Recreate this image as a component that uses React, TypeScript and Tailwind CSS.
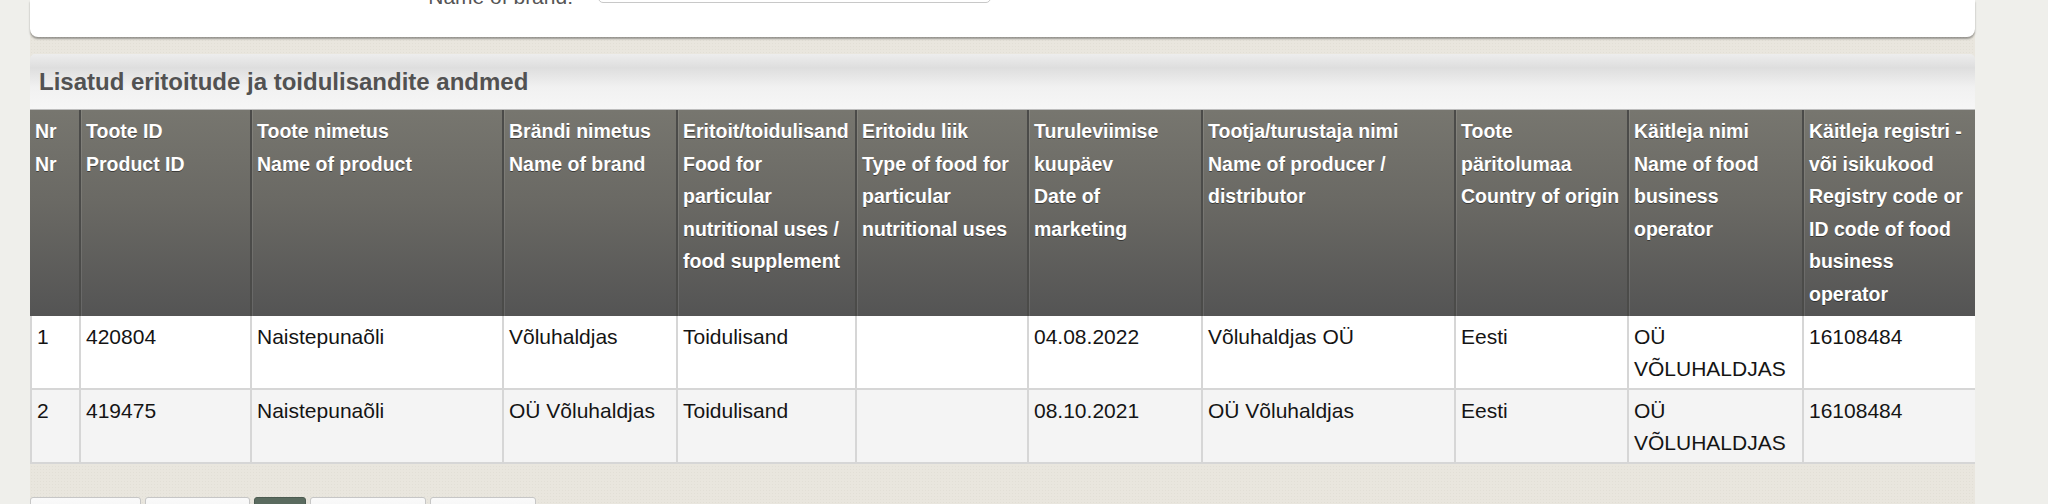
import React from 'react';

const headers: string[][] = [
  ['Nr', 'Nr'],
  ['Toote ID', 'Product ID'],
  ['Toote nimetus', 'Name of product'],
  ['Brändi nimetus', 'Name of brand'],
  ['Eritoit/toidulisand', 'Food for particular nutritional uses / food supplement'],
  ['Eritoidu liik', 'Type of food for particular nutritional uses'],
  ['Turuleviimise kuupäev', 'Date of marketing'],
  ['Tootja/turustaja nimi', 'Name of producer / distributor'],
  ['Toote päritolumaa', 'Country of origin'],
  ['Käitleja nimi', 'Name of food business operator'],
  ['Käitleja registri - või isikukood', 'Registry code or ID code of food business operator'],
];

const rows: string[][] = [
  ['1', '420804', 'Naistepunaõli', 'Võluhaldjas', 'Toidulisand', '', '04.08.2022', 'Võluhaldjas OÜ', 'Eesti', 'OÜ VÕLUHALDJAS', '16108484'],
  ['2', '419475', 'Naistepunaõli', 'OÜ Võluhaldjas', 'Toidulisand', '', '08.10.2021', 'OÜ Võluhaldjas', 'Eesti', 'OÜ VÕLUHALDJAS', '16108484'],
];

// same template for header and body so the columns line up
const cols =
  'grid grid-cols-[51px_171px_252px_174px_179px_172px_174px_253px_173px_175px_171px]';

// pager buttons, only their top edge is in view
const pages = [
  { id: 'first', w: 'w-[111px]' },
  { id: 'prev', w: 'w-[105px]' },
  { id: 'cur', w: 'w-[52px]', active: true },
  { id: 'next', w: 'w-[116px]' },
  { id: 'last', w: 'w-[106px]' },
];

export default function App() {
  return (
    <div className="h-[504px] w-full overflow-hidden bg-[#efefeb] font-['Liberation_Sans',Arial,sans-serif]">
      <div className="ml-[30px] w-[1945px] h-full bg-[#e9e6de] bg-[radial-gradient(#e2dfd6_0.8px,transparent_1px)] bg-[length:3px_3px]">
        {/* search form panel (scrolled mostly out of view) */}
        <div className="flow-root h-[37px] bg-white rounded-b-[8px] shadow-[0_2px_2px_rgba(0,0,0,0.35)]">
          <div className="flex items-start -mt-[19px]">
            <div className="w-[543px] text-right text-[21px] leading-[32px] text-[#555]">Name of brand:</div>
            <div className="ml-[25px] -mt-[18px] h-[40px] w-[393px] rounded-[5px] border border-[#c8c8c8] bg-white" />
          </div>
        </div>

        {/* results */}
        <div className="mt-[17px]">
          <div className="h-[56px] rounded-t-[5px] border-b border-[#bdbdbd] bg-[linear-gradient(to_bottom,#ededed_0%,#dedede_25%,#f1f1f1_60%,#f6f6f6_100%)] pl-[9px] pt-[14px]">
            <h2 className="text-[24px] leading-[28px] font-bold text-[#525252]">
              Lisatud eritoitude ja toidulisandite andmed
            </h2>
          </div>

          <div className={`${cols} bg-[linear-gradient(to_bottom,#77766f_0%,#6a6964_45%,#545454_100%)]`}>
            {headers.map((h, i) => (
              <div
                key={i}
                className={`pl-[5px] pr-[4px] pt-[5px] pb-[5px] text-[19.5px] leading-[32.6px] font-bold text-white [text-shadow:0_1px_0_rgba(0,0,0,0.45)] ${
                  i < headers.length - 1 ? 'border-r-2 border-[#4b4b49]' : ''
                } ${i > 0 ? 'shadow-[inset_1px_0_0_rgba(255,255,255,0.1)]' : ''}`}
              >
                {h[0]}
                <br />
                {h[1]}
              </div>
            ))}
          </div>

          {rows.map((r, ri) => (
            <div key={ri} className={`${cols} ${ri % 2 === 0 ? 'bg-white' : 'bg-[#f4f4f4]'}`}>
              {r.map((c, ci) => (
                <div
                  key={ci}
                  className={`pl-[5px] pr-[4px] pt-[5px] pb-[2px] text-[21px] leading-[32.6px] text-[#141414] border-b-2 border-[#d6d6d6] ${
                    ci < r.length - 1 ? 'border-r-2' : ''
                  } ${ci === 0 ? 'border-l-2' : ''}`}
                >
                  {c}
                </div>
              ))}
            </div>
          ))}
        </div>

        {/* pager */}
        <div className="mt-[33px] flex gap-[4px]">
          {pages.map(p => (
            <div
              key={p.id}
              className={`${p.w} h-[40px] rounded-t-[3px] border ${
                p.active
                  ? 'bg-[#5a6b5f] border-[#4c5b51]'
                  : 'bg-[linear-gradient(to_bottom,#fafafa,#e9e9e9)] border-[#c6c6c6]'
              }`}
            />
          ))}
        </div>
      </div>
    </div>
  );
}
